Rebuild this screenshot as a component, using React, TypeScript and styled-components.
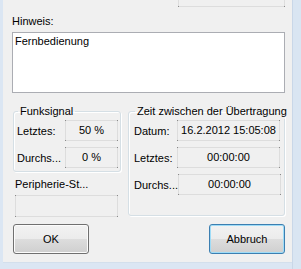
import React from "react";
import styled, { createGlobalStyle } from "styled-components";

const Global = createGlobalStyle`
  html, body { margin: 0; padding: 0; background: #f0f0f0; }
  body { width: 301px; height: 269px; overflow: hidden; font-family: "Liberation Sans", Arial, sans-serif; font-size: 11px; color: #000; }
`;

const Window = styled.div`
  display: flex;
  width: 301px;
  height: 269px;
  overflow: hidden;
`;

const LeftEdge = styled.div`
  width: 3px;
  flex: none;
  background: #dbe6f3;
`;

const RightEdge = styled.div`
  width: 9px;
  flex: none;
  background: #d9e5f2;
  border-left: 1px solid #c9d7e8;
  box-sizing: border-box;
`;

const Body = styled.div`
  flex: 1;
  display: flex;
  flex-direction: column;
  min-width: 0;
`;

const BottomEdge = styled.div`
  height: 7px;
  flex: none;
  background: #dbe6f3;
  border-top: 1px solid #d3dfec;
  box-sizing: border-box;
`;

const Client = styled.div`
  flex: 1;
  background: #f0f0f0;
  display: flex;
  flex-direction: column;
  padding: 0 7px 0 9px;
  min-height: 0;
`;

const Field = styled.div<{ $w?: number; $h?: number; $align?: string }>`
  position: relative;
  box-sizing: border-box;
  width: ${(p) => (p.$w ? `${p.$w}px` : "auto")};
  height: ${(p) => p.$h ?? 21}px;
  border: 1px solid #dddddd;
  background: #f0f0f0;
  display: flex;
  align-items: center;
  justify-content: ${(p) => p.$align ?? "center"};
  line-height: 13px;
  white-space: nowrap;
  &::before {
    content: "";
    position: absolute;
    inset: -1px;
    pointer-events: none;
    background:
      linear-gradient(#8a8a8a, #8a8a8a) left top / 1px 1px no-repeat,
      linear-gradient(#8a8a8a, #8a8a8a) right top / 1px 1px no-repeat,
      linear-gradient(#8a8a8a, #8a8a8a) left bottom / 1px 1px no-repeat,
      linear-gradient(#8a8a8a, #8a8a8a) right bottom / 1px 1px no-repeat;
  }
`;

const TopField = styled(Field)`
  align-self: flex-end;
  margin-top: -14px;
  flex: none;
`;

const Label = styled.div<{ $mt?: number; $ml?: number }>`
  line-height: 13px;
  margin-top: ${(p) => p.$mt ?? 0}px;
  margin-left: ${(p) => p.$ml ?? 0}px;
  white-space: nowrap;
`;

const TextArea = styled.div`
  box-sizing: border-box;
  height: 61px;
  margin-top: 4px;
  border: 1px solid #abadb3;
  background: #fff;
  padding: 2px 2px;
  line-height: 13px;
  flex: none;
`;

const GroupsRow = styled.div`
  display: flex;
  gap: 7px;
  margin-top: 11px;
  align-items: flex-start;
`;

const LeftColumn = styled.div`
  display: flex;
  flex-direction: column;
  width: 108px;
  margin-left: 1px;
`;

const Group = styled.fieldset<{ $w: number; $h: number; $pl: number; $pr: number }>`
  box-sizing: border-box;
  margin: 0;
  min-width: 0;
  width: ${(p) => p.$w}px;
  height: ${(p) => p.$h}px;
  padding: 1px ${(p) => p.$pr}px 3px ${(p) => p.$pl}px;
  border: 1px solid #d5dfe5;
  border-radius: 3px;
  box-shadow: inset 1px 1px 0 #fff, 1px 1px 0 #fff;
  display: flex;
  flex-direction: column;
  gap: 6px;
`;

const Legend = styled.legend`
  padding: 0 2px;
  margin-left: 1px;
  line-height: 15px;
  white-space: nowrap;
  float: none;
`;

const Row = styled.div<{ $fw: number }>`
  display: grid;
  grid-template-columns: 1fr ${(p) => p.$fw}px;
  align-items: center;
`;

const PeriBox = styled(Field)`
  margin-top: 4px;
  margin-left: 2px;
`;

const ButtonRow = styled.div`
  display: flex;
  justify-content: space-between;
  margin-top: 7px;
  padding-left: 1px;
`;

const Button = styled.button<{ $default?: boolean }>`
  box-sizing: border-box;
  width: 76px;
  height: 30px;
  padding: 0;
  font-family: "Liberation Sans", Arial, sans-serif;
  font-size: 11px;
  color: #000;
  border-radius: 3px;
  border: 1px solid ${(p) => (p.$default ? "#3c7fb1" : "#707070")};
  background: linear-gradient(#f2f2f2 0%, #ebebeb 50%, #dddddd 50%, #cfcfcf 100%);
  box-shadow: inset 0 0 0 1px ${(p) => (p.$default ? "#9fdcf7" : "#fcfcfc")};
`;

export default function App() {
  return (
    <>
      <Global />
      <Window>
        <LeftEdge />
        <Body>
          <Client>
            <TopField $w={107} />
            <Label $mt={8}>Hinweis:</Label>
            <TextArea>Fernbedienung</TextArea>
            <GroupsRow>
              <LeftColumn>
                <Group $w={108} $h={68} $pl={3} $pr={2}>
                  <Legend>Funksignal</Legend>
                  <Row $fw={53}>
                    <span>Letztes:</span>
                    <Field>50 %</Field>
                  </Row>
                  <Row $fw={53}>
                    <span>Durchs...</span>
                    <Field>0 %</Field>
                  </Row>
                </Group>
                <Label $mt={6} $ml={2}>Peripherie-St...</Label>
                <PeriBox $w={103} $h={22} />
              </LeftColumn>
              <Group $w={157} $h={112} $pl={5} $pr={4}>
                <Legend>Zeit zwischen der Übertragung</Legend>
                <Row $fw={103}>
                  <span>Datum:</span>
                  <Field>16.2.2012 15:05:08</Field>
                </Row>
                <Row $fw={103}>
                  <span>Letztes:</span>
                  <Field>00:00:00</Field>
                </Row>
                <Row $fw={103}>
                  <span>Durchs...</span>
                  <Field>00:00:00</Field>
                </Row>
              </Group>
            </GroupsRow>
            <ButtonRow>
              <Button>OK</Button>
              <Button $default>Abbruch</Button>
            </ButtonRow>
          </Client>
          <BottomEdge />
        </Body>
        <RightEdge />
      </Window>
    </>
  );
}
